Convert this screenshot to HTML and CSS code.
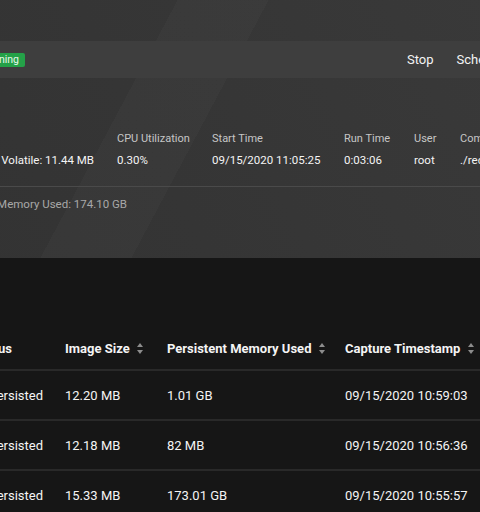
FILE: index.html
```html
<!DOCTYPE html>
<html lang="en">
<head>
  <meta charset="UTF-8" />
  <meta name="viewport" content="width=device-width, initial-scale=1.0" />
  <title>Process Snapshots</title>
  <link rel="stylesheet" href="styles.css">
</head>
<body>
  <div class="page">
    <div class="process">
      <div class="toolbar">
        <div class="title-group">
          <span class="proc-name">redis-server</span>
          <span class="tag">Running</span>
        </div>
        <div class="actions">
          <a href="#">Stop</a>
          <a href="#">Schedule Snapshot</a>
        </div>
      </div>

      <div class="meta">
        <div class="meta-col memory">
          <div class="meta-label">Memory</div>
          <div class="meta-value">Persistent: 174.10 GB &nbsp; Volatile: 11.44 MB</div>
        </div>
        <div class="meta-col cpu">
          <div class="meta-label">CPU Utilization</div>
          <div class="meta-value">0.30%</div>
        </div>
        <div class="meta-col start">
          <div class="meta-label">Start Time</div>
          <div class="meta-value">09/15/2020 11:05:25</div>
        </div>
        <div class="meta-col run">
          <div class="meta-label">Run Time</div>
          <div class="meta-value">0:03:06</div>
        </div>
        <div class="meta-col user">
          <div class="meta-label">User</div>
          <div class="meta-value">root</div>
        </div>
        <div class="meta-col command">
          <div class="meta-label">Command</div>
          <div class="meta-value">./redis-server</div>
        </div>
      </div>

      <div class="summary">
        <span>Total Persistent Memory Used: 174.10 GB</span>
      </div>
    </div>

    <div class="snapshots">
      <div class="row head">
        <div class="status">Status</div>
        <div>Image Size <svg class="sort" viewBox="0 0 6 11"><path d="M3 0 6 4H0z M0 7h6l-3 4z"/></svg></div>
        <div>Persistent Memory Used <svg class="sort" viewBox="0 0 6 11"><path d="M3 0 6 4H0z M0 7h6l-3 4z"/></svg></div>
        <div>Capture Timestamp <svg class="sort" viewBox="0 0 6 11"><path d="M3 0 6 4H0z M0 7h6l-3 4z"/></svg></div>
      </div>
      <div class="row">
        <div class="status">Persisted</div>
        <div>12.20 MB</div>
        <div>1.01 GB</div>
        <div>09/15/2020 10:59:03</div>
      </div>
      <div class="row">
        <div class="status">Persisted</div>
        <div>12.18 MB</div>
        <div>82 MB</div>
        <div>09/15/2020 10:56:36</div>
      </div>
      <div class="row">
        <div class="status">Persisted</div>
        <div>15.33 MB</div>
        <div>173.01 GB</div>
        <div>09/15/2020 10:55:57</div>
      </div>
    </div>
  </div>
</body>
</html>
```

FILE: styles.css
```css
body {
  margin: 0;
  width: 480px;
  height: 512px;
  overflow: hidden;
  background: #161616;
  color: #f4f4f4;
  font-family: Roboto, "Liberation Sans", sans-serif;
}
.page {
  margin-left: -300px;
  width: 1000px;
}

/* process header */
.process {
  height: 258px;
  padding-top: 41px;
  box-sizing: border-box;
  background:
    linear-gradient(118deg, rgba(255,255,255,0) 42%, rgba(255,255,255,0.02) 42%, rgba(255,255,255,0.02) 50%, rgba(255,255,255,0) 50%),
    linear-gradient(62deg, #313131 0%, #353535 45%, #3b3b3b 100%);
}
.toolbar {
  display: flex;
  align-items: center;
  height: 37px;
  background: #3e3e3e;
}
.title-group {
  flex: none;
  width: 325px;
  display: flex;
  justify-content: space-between;
  align-items: center;
}
.proc-name {
  font-size: 16px;
}
.tag {
  background: #24a148;
  color: #e8f8ec;
  font-size: 10.5px;
  line-height: 14px;
  padding: 0 6px;
  border-radius: 2px;
}
.actions {
  display: flex;
  gap: 23px;
  margin-left: 382px;
  white-space: nowrap;
}
.actions a {
  color: #f4f4f4;
  text-decoration: none;
  font-size: 13px;
}

.meta {
  display: flex;
  padding: 53px 0 18px;
  border-bottom: 1px solid #4a4a4a;
  white-space: nowrap;
}
.meta-label {
  font-size: 11px;
  line-height: 16px;
  color: #c6c6c6;
}
.meta-value {
  margin-top: 5px;
  font-size: 11.5px;
  line-height: 16px;
  color: #f4f4f4;
}
.memory { width: 417px; }
.memory .meta-value {
  text-align: right;
  padding-right: 23px;
}
.cpu { width: 95px; }
.start { width: 132px; }
.run { width: 70px; }
.user { width: 46px; }

.summary {
  width: 427px;
  padding-top: 9px;
  text-align: right;
  white-space: nowrap;
  font-size: 11.5px;
  line-height: 16px;
  color: #a8a8a8;
}

/* snapshot table */
.snapshots {
  padding-top: 69px;
}
.row {
  display: grid;
  grid-template-columns: 365px 102px 178px 1fr;
  align-items: center;
  height: 50px;
  box-sizing: border-box;
  border-bottom: 2px solid #292929;
  font-size: 13px;
  white-space: nowrap;
  color: #f4f4f4;
}
.row.head {
  height: 44px;
  font-weight: 700;
}
.row .status {
  text-align: right;
  padding-right: 22px;
}
.row.head .status {
  padding-right: 53px;
}
.sort {
  width: 6px;
  height: 11px;
  margin-left: 4px;
  vertical-align: -1px;
  fill: #8d8d8d;
}
```
